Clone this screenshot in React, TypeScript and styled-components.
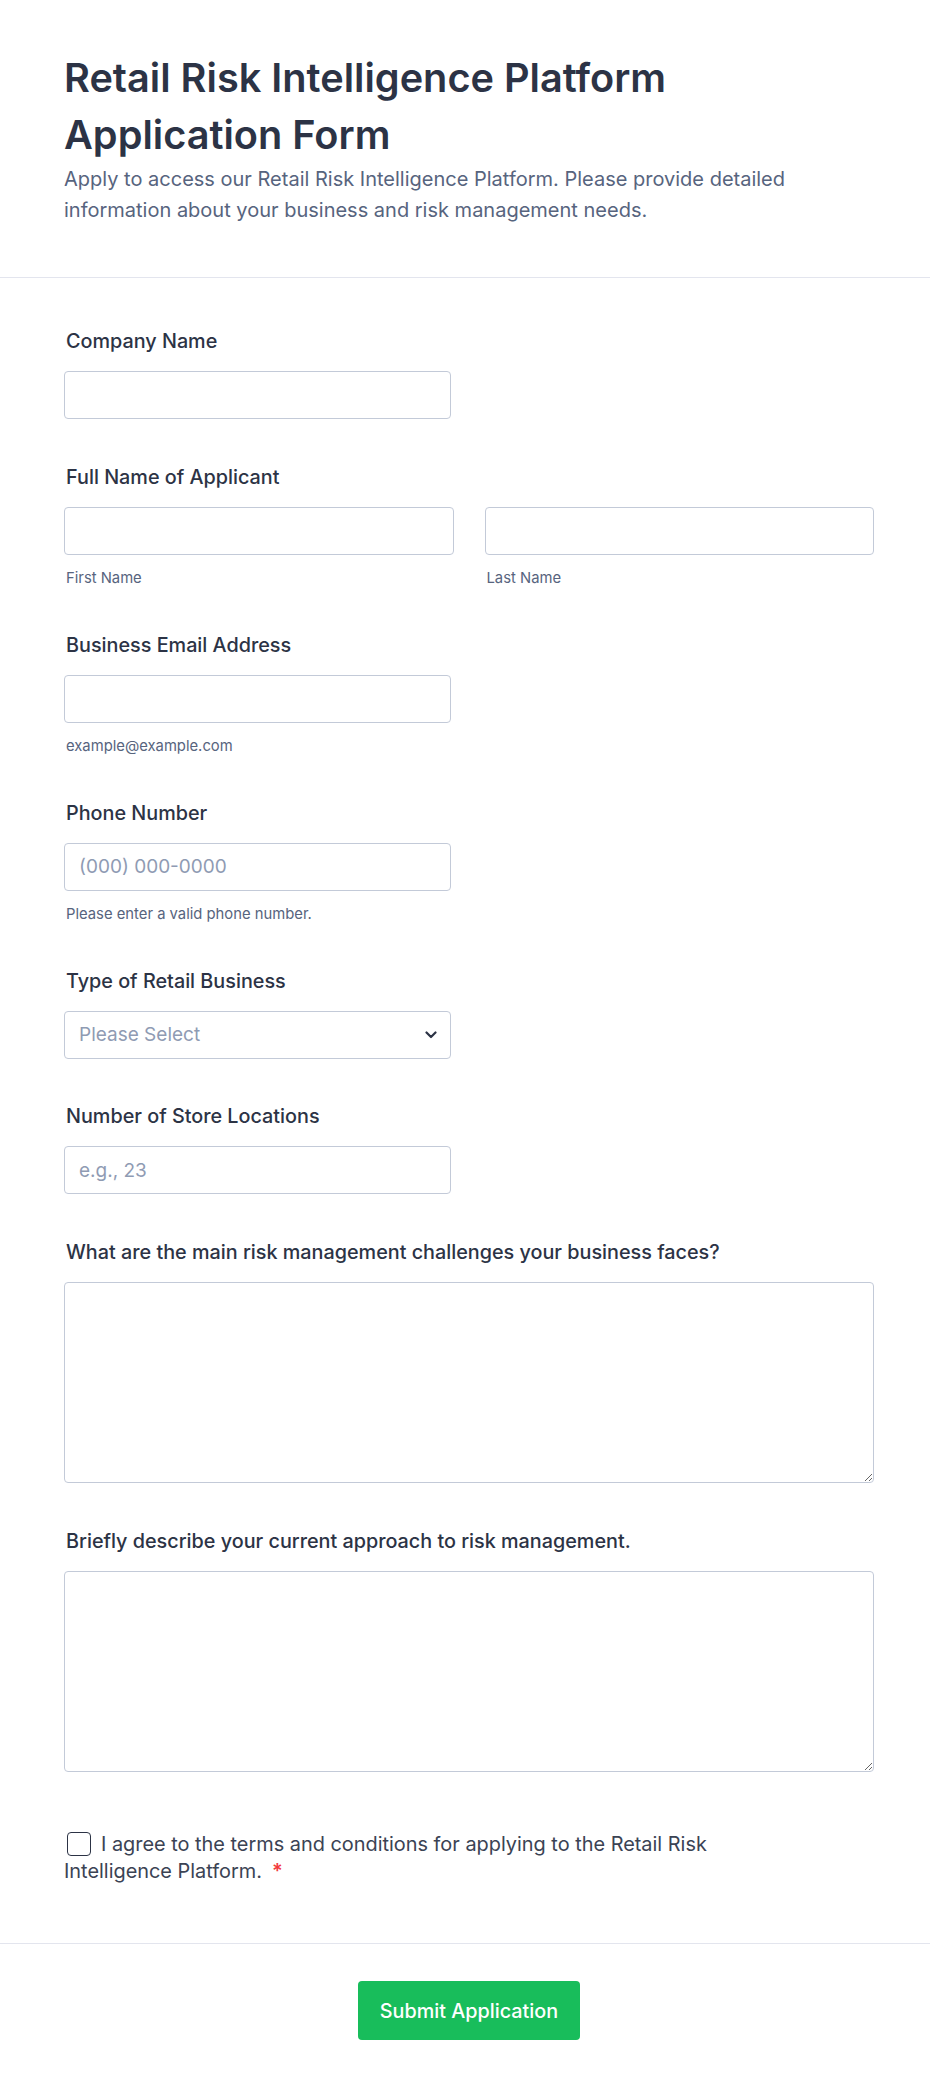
import React from "react";
import styled, { createGlobalStyle } from "styled-components";

const GlobalStyle = createGlobalStyle`
  html, body {
    margin: 0;
    padding: 0;
    background: #ffffff;
  }
  body {
    font-family: Inter, "Noto Sans", "Liberation Sans", sans-serif;
    color: #2c3345;
  }
  * { box-sizing: border-box; }
`;

const Page = styled.div`
  width: 100%;
  background: #ffffff;
`;

const Header = styled.header`
  padding: 50px 56px 51px 64px;
  border-bottom: 1px solid #e3e5ee;
`;

const Title = styled.h1`
  margin: 0;
  font-size: 39.7px;
  line-height: 57px;
  font-weight: 600;
  color: #2c3345;
  max-width: 760px;
`;

const Subtitle = styled.p`
  margin: 0;
  font-size: 20px;
  line-height: 31px;
  color: #57647e;
  max-width: 760px;
`;

const FormBody = styled.form`
  display: flex;
  flex-direction: column;
  gap: 45.6px;
  padding: 51px 56px 58px 64px;
  border-bottom: 1px solid #e3e5ee;
`;

const Field = styled.div`
  display: flex;
  flex-direction: column;
`;

const Label = styled.label`
  display: block;
  font-size: 19.8px;
  line-height: 24px;
  font-weight: 500;
  color: #2c3345;
  padding-left: 2px;
  margin-bottom: 18px;
`;

const inputBase = `
  height: 48px;
  border: 1px solid #c3cad8;
  border-radius: 4px;
  background: #ffffff;
  padding: 0 14px;
  font-family: Inter, "Noto Sans", "Liberation Sans", sans-serif;
  font-size: 19px;
  color: #2c3345;
  outline: none;
  &::placeholder { color: #8f9bb3; }
`;

const TextInput = styled.input<{ $half?: boolean }>`
  ${inputBase}
  width: ${(p) => (p.$half ? "387px" : "100%")};
`;

const NameRow = styled.div`
  display: grid;
  grid-template-columns: 1fr 1fr;
  column-gap: 31px;
`;

const NamePart = styled.div`
  display: flex;
  flex-direction: column;
`;

const SubLabel = styled.span`
  display: block;
  margin-top: 15.5px;
  font-size: 14.8px;
  line-height: 17px;
  color: #57647e;
  padding-left: 2px;
`;

const SelectWrap = styled.div`
  position: relative;
  width: 387px;
`;

const Select = styled.select`
  ${inputBase}
  width: 100%;
  appearance: none;
  -webkit-appearance: none;
  color: #8f9bb3;
  cursor: pointer;
`;

const Chevron = styled.svg`
  position: absolute;
  right: 14px;
  top: 50%;
  width: 12px;
  height: 8px;
  margin-top: -4px;
  pointer-events: none;
`;

const TextArea = styled.textarea`
  width: 100%;
  height: 201px;
  border: 1px solid #c3cad8;
  border-radius: 4px;
  background: #ffffff;
  padding: 12px 14px;
  font-family: Inter, "Noto Sans", "Liberation Sans", sans-serif;
  font-size: 19px;
  color: #2c3345;
  outline: none;
  resize: vertical;
  display: block;
`;

const ConsentField = styled.div`
  margin-top: 14px;
  max-width: 720px;
  font-size: 19.9px;
  line-height: 27px;
  color: #3b4354;
`;

const CheckBox = styled.input`
  appearance: none;
  -webkit-appearance: none;
  width: 24px;
  height: 24px;
  margin: 0 10px 0 3px;
  border: 1.5px solid #2c3345;
  border-radius: 4px;
  vertical-align: -5px;
  background: #ffffff;
`;

const Required = styled.span`
  color: #f23a3c;
  font-weight: 600;
  margin-left: 10px;
`;

const Footer = styled.div`
  display: flex;
  justify-content: center;
  padding: 37px 56px 50px 64px;
`;

const SubmitButton = styled.button`
  width: 222px;
  height: 59px;
  border: none;
  border-radius: 4px;
  background: #18bd5b;
  color: #ffffff;
  font-family: Inter, "Noto Sans", "Liberation Sans", sans-serif;
  font-size: 19.8px;
  font-weight: 500;
  cursor: pointer;
`;

export default function App() {
  return (
    <Page>
      <GlobalStyle />
      <Header>
        <Title>Retail Risk Intelligence Platform Application Form</Title>
        <Subtitle>
          Apply to access our Retail Risk Intelligence Platform. Please provide detailed
          information about your business and risk management needs.
        </Subtitle>
      </Header>
      <FormBody onSubmit={(e) => e.preventDefault()}>
        <Field>
          <Label>Company Name</Label>
          <TextInput $half type="text" />
        </Field>
        <Field>
          <Label>Full Name of Applicant</Label>
          <NameRow>
            <NamePart>
              <TextInput type="text" />
              <SubLabel>First Name</SubLabel>
            </NamePart>
            <NamePart>
              <TextInput type="text" />
              <SubLabel>Last Name</SubLabel>
            </NamePart>
          </NameRow>
        </Field>
        <Field>
          <Label>Business Email Address</Label>
          <TextInput $half type="email" />
          <SubLabel>example@example.com</SubLabel>
        </Field>
        <Field>
          <Label>Phone Number</Label>
          <TextInput $half type="tel" placeholder="(000) 000-0000" />
          <SubLabel>Please enter a valid phone number.</SubLabel>
        </Field>
        <Field>
          <Label>Type of Retail Business</Label>
          <SelectWrap>
            <Select defaultValue="">
              <option value="">Please Select</option>
              <option>Apparel</option>
              <option>Electronics</option>
              <option>Grocery</option>
            </Select>
            <Chevron viewBox="0 0 12 8" fill="none">
              <path d="M1.5 1.5 L6 6 L10.5 1.5" stroke="#2c3345" strokeWidth="2.2" strokeLinecap="round" strokeLinejoin="round" />
            </Chevron>
          </SelectWrap>
        </Field>
        <Field>
          <Label>Number of Store Locations</Label>
          <TextInput $half type="text" placeholder="e.g., 23" />
        </Field>
        <Field>
          <Label>What are the main risk management challenges your business faces?</Label>
          <TextArea />
        </Field>
        <Field>
          <Label>Briefly describe your current approach to risk management.</Label>
          <TextArea />
        </Field>
        <ConsentField>
          <CheckBox type="checkbox" />
          I agree to the terms and conditions for applying to the Retail Risk Intelligence Platform.
          <Required>*</Required>
        </ConsentField>
      </FormBody>
      <Footer>
        <SubmitButton type="submit">Submit Application</SubmitButton>
      </Footer>
    </Page>
  );
}
